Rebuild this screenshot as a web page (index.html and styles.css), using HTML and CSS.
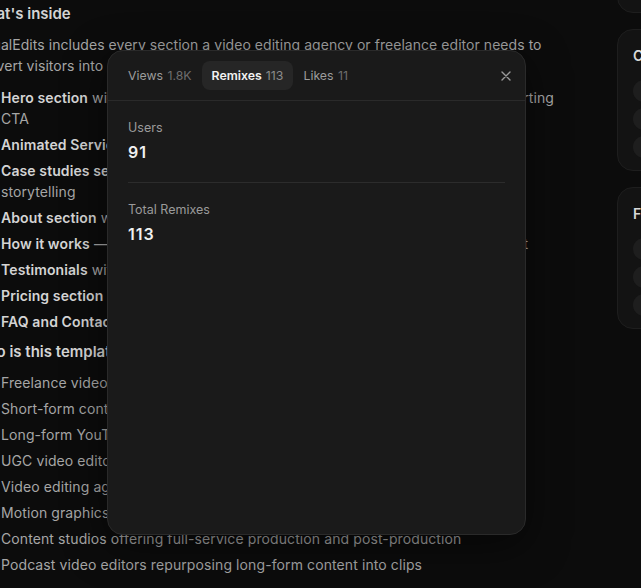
FILE: index.html
```html
<!DOCTYPE html>
<html lang="en">
<head>
<meta charset="utf-8">
<title>VisualEdits – Template</title>
<link rel="stylesheet" href="styles.css">
</head>
<body>
<div class="page">
  <main class="content">
    <h2 class="heading">What's inside</h2>
    <p class="para">VisualEdits includes every section a video editing agency or freelance editor needs to convert visitors into paying clients:</p>
    <ul class="list">
      <li><strong>Hero section</strong> with a full-screen showreel video background plus a high-converting CTA</li>
      <li><strong>Animated Services</strong> grid with hover effects</li>
      <li><strong>Case studies section</strong> with before/after comparisons, client results and project storytelling</li>
      <li><strong>About section</strong> with editor bio and tools</li>
      <li><strong>How it works</strong> — a clear four-step process from the project brief to the final cut</li>
      <li><strong>Testimonials</strong> with client logos and ratings</li>
      <li><strong>Pricing section</strong> with three tiers</li>
      <li><strong>FAQ and Contact</strong> with booking form</li>
    </ul>
    <h2 class="heading">Who is this template for?</h2>
    <ul class="list">
      <li>Freelance video editors building a portfolio</li>
      <li>Short-form content editors for TikTok and Reels</li>
      <li>Long-form YouTube editors</li>
      <li>UGC video editors and creators</li>
      <li>Video editing agencies</li>
      <li>Motion graphics artists</li>
      <li>Content studios offering full-service production and post-production</li>
      <li>Podcast video editors repurposing long-form content into clips</li>
    </ul>
  </main>
  <aside class="side">
    <section class="card">
      <h3 class="card-title">Creator</h3>
      <div class="rows">
        <div class="row"><span class="dot"></span><span class="row-text">Profile</span></div>
        <div class="row"><span class="dot"></span><span class="row-text">Website</span></div>
        <div class="row"><span class="dot"></span><span class="row-text">Contact</span></div>
      </div>
    </section>
    <section class="card">
      <h3 class="card-title">Categories</h3>
      <div class="rows">
        <div class="row"><span class="dot"></span><span class="row-text">Portfolio</span></div>
        <div class="row"><span class="dot"></span><span class="row-text">Agency</span></div>
        <div class="row"><span class="dot"></span><span class="row-text">Video</span></div>
      </div>
    </section>
    <section class="card">
      <h3 class="card-title">Features</h3>
      <div class="rows">
        <div class="row"><span class="dot"></span><span class="row-text">Animations</span></div>
        <div class="row"><span class="dot"></span><span class="row-text">CMS</span></div>
        <div class="row"><span class="dot"></span><span class="row-text">Responsive</span></div>
      </div>
    </section>
  </aside>
</div>

<div class="modal" role="dialog" aria-label="Stats">
  <div class="modal-head">
    <div class="tabs">
      <button class="tab">Views <span class="count">1.8K</span></button>
      <button class="tab active">Remixes <span class="count">113</span></button>
      <button class="tab">Likes <span class="count">11</span></button>
    </div>
    <button class="close" aria-label="Close">
      <svg width="10" height="10" viewBox="0 0 10 10"><path d="M1 1L9 9M9 1L1 9" stroke="currentColor" stroke-width="1.4" stroke-linecap="round" fill="none"/></svg>
    </button>
  </div>
  <div class="modal-body">
    <div class="stat">
      <div class="stat-label">Users</div>
      <div class="stat-value">91</div>
    </div>
    <div class="stat">
      <div class="stat-label">Total Remixes</div>
      <div class="stat-value">113</div>
    </div>
  </div>
</div>
</body>
</html>
```

FILE: styles.css
```css
html, body {
  margin: 0;
  padding: 0;
  overflow: hidden;
  background: #0c0c0c;
  height: 100%;
}
body {
  font-family: Inter, "Noto Sans", "Liberation Sans", sans-serif;
  color: #a6a6a6;
  position: relative;
}
.page {
  display: flex;
  gap: 37px;
  width: 960px;
}
.content {
  flex: 0 0 608px;
  margin-left: -28px;
  padding-top: 2px;
}
.heading {
  margin: 0;
  font-size: 15px;
  line-height: 24px;
  font-weight: 600;
  color: #d4d4d4;
}
.para {
  margin: 8px 0 11px;
  font-size: 14px;
  line-height: 21px;
  letter-spacing: 0.05px;
}
.list {
  list-style: none;
  margin: 0 0 8px;
  padding: 0 0 0 29px;
  font-size: 14px;
  line-height: 21px;
  letter-spacing: 0.1px;
}
.list li {
  margin-bottom: 5px;
}
.list li:last-child { margin-bottom: 0; }
.list + .heading { margin-top: 8px; }
.heading + .list { margin-top: 8px; }
.list strong {
  font-weight: 600;
  color: #d4d4d4;
}
.side {
  flex: 0 0 300px;
  display: flex;
  flex-direction: column;
  gap: 16px;
  margin-top: -129px;
}
.card {
  height: 142px;
  box-sizing: border-box;
  padding: 16px 15px 14px;
  background: #131313;
  border: 1px solid #1e1e1e;
  border-radius: 16px;
}
.card-title {
  margin: 0;
  font-size: 14px;
  line-height: 20px;
  font-weight: 600;
  color: #d8d8d8;
}
.rows {
  margin-top: 14px;
  display: flex;
  flex-direction: column;
  gap: 6px;
}
.row {
  display: flex;
  align-items: center;
  gap: 10px;
  height: 22px;
}
.dot {
  width: 22px;
  height: 22px;
  border-radius: 50%;
  background: #1e1e1e;
  flex: 0 0 22px;
}
.row-text {
  font-size: 13px;
  color: #999;
}
.modal {
  position: absolute;
  left: 107px;
  top: 50px;
  width: 419px;
  height: 485px;
  box-sizing: border-box;
  background: #1a1a1a;
  border: 1px solid #2a2a2a;
  border-radius: 16px;
  box-shadow: 0 10px 40px rgba(0,0,0,0.5);
  overflow: hidden;
}
.modal-head {
  display: flex;
  align-items: center;
  justify-content: space-between;
  padding: 10px 9px 10px 10px;
  border-bottom: 1px solid #2a2a2a;
}
.tabs {
  display: flex;
  gap: 0;
}
.tab {
  font-family: inherit;
  font-size: 12.3px;
  line-height: 17px;
  padding: 6px 10px;
  border: 0;
  border-radius: 8px;
  background: transparent;
  color: #9c9c9c;
  font-weight: 400;
}
.tab .count {
  color: #6e6e6e;
  font-weight: 400;
  margin-left: 1px;
}
.tab.active {
  background: #262626;
  color: #f2f2f2;
  font-weight: 600;
}
.tab.active .count {
  color: #8c8c8c;
  font-weight: 400;
}
.close {
  width: 20px;
  height: 20px;
  padding: 0;
  border: 0;
  background: transparent;
  color: #9a9a9a;
  display: flex;
  align-items: center;
  justify-content: center;
}
.modal-body {
  padding: 17px 20px 16px;
}
.stat + .stat {
  border-top: 1px solid #2c2c2c;
  padding-top: 17px;
}
.stat:first-child {
  padding-bottom: 18px;
}
.stat-label {
  font-size: 12.5px;
  line-height: 20px;
  color: #9a9a9a;
}
.stat-value {
  margin-top: 2px;
  font-size: 16px;
  line-height: 24px;
  font-weight: 600;
  color: #f0f0f0;
  letter-spacing: 1px;
}
```
